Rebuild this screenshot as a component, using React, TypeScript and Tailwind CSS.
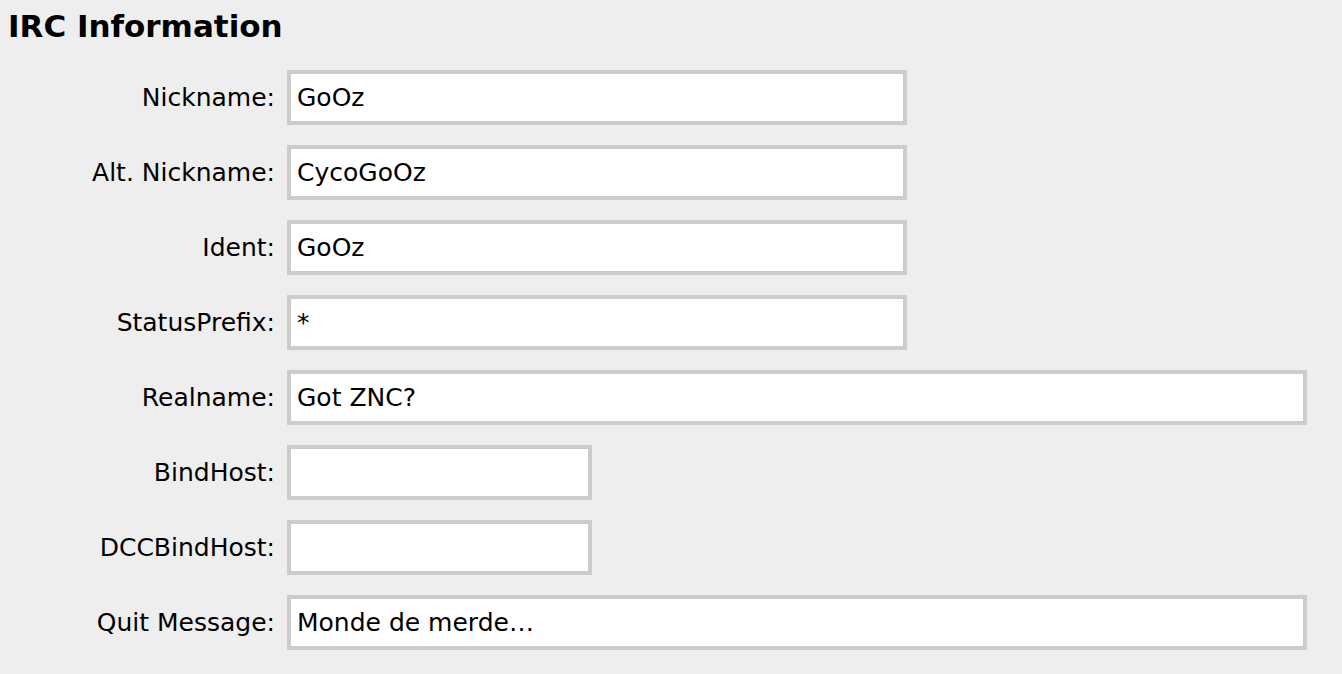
const fields: { label: string; value: string; width: string }[] = [
  { label: "Nickname:", value: "GoOz", width: "w-[620px]" },
  { label: "Alt. Nickname:", value: "CycoGoOz", width: "w-[620px]" },
  { label: "Ident:", value: "GoOz", width: "w-[620px]" },
  { label: "StatusPrefix:", value: "*", width: "w-[620px]" },
  { label: "Realname:", value: "Got ZNC?", width: "w-[1020px]" },
  { label: "BindHost:", value: "", width: "w-[305px]" },
  { label: "DCCBindHost:", value: "", width: "w-[305px]" },
  { label: "Quit Message:", value: "Monde de merde…", width: "w-[1020px]" },
];

const App = () => {
  return (
    <div className="min-h-[674px] bg-[#eeeeee] text-black font-['DejaVu_Sans',sans-serif]">
      <h2 className="pl-2 pt-[6px] text-[31px] font-bold leading-[40px]">
        IRC Information
      </h2>
      <div className="mt-[24px] flex flex-col gap-[20px]">
        {fields.map((f) => (
          <div key={f.label} className="flex items-center">
            <label className="w-[276px] pr-[1px] text-right text-[25px]">
              {f.label}
            </label>
            <input
              type="text"
              defaultValue={f.value}
              className={`${f.width} ml-[11px] h-[55px] border-4 border-[#cccccc] bg-white px-[6px] text-[25px] outline-none`}
            />
          </div>
        ))}
      </div>
    </div>
  );
};

export default App;
